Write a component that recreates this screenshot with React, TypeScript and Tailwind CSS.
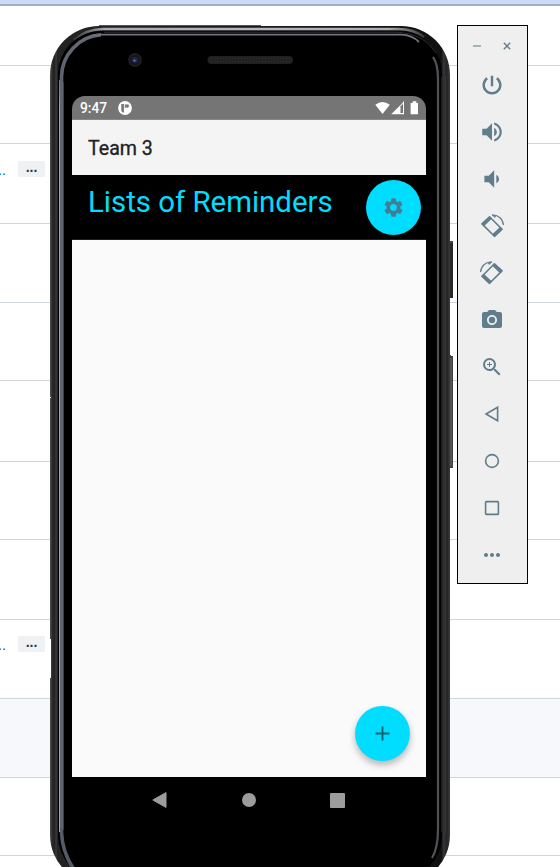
import React from "react";
import {
  MdVolumeUp,
  MdVolumeDown,
  MdPhotoCamera,
  MdZoomIn,
  MdMoreHoriz,
  MdSettings,
} from "react-icons/md";

type TableRow = { height: string; more?: boolean; shaded?: boolean };

const rows: TableRow[] = [
  { height: "h-[60px]" },
  { height: "h-[78px]" },
  { height: "h-[80px]", more: true },
  { height: "h-[79px]" },
  { height: "h-[78px]" },
  { height: "h-[81px]" },
  { height: "h-[78px]" },
  { height: "h-[80px]" },
  { height: "h-[79px]", more: true },
  { height: "h-[79px]", shaded: true },
  { height: "h-[78px]" },
];

function BackgroundTable() {
  return (
    <div className="flex h-full flex-col">
      <div className="h-[6px] shrink-0 border-b-2 border-[#a1adc9] bg-[#cadbf8]" />
      {rows.map((row, i) => (
        <div
          key={i}
          className={`flex shrink-0 items-start border-b border-[#d0d4de] ${row.height} ${row.shaded ? "bg-[#f6f8fb]" : "bg-white"}`}
        >
          {row.more && (
            <div
              className={`flex items-start font-['Liberation_Sans',sans-serif] text-[14px] ${i === 2 ? "pt-[17px]" : "pt-[16px]"}`}
            >
              <span className="w-[18px] indent-[-2px] leading-[18px] text-[#0052cc]">..</span>
              <span className="h-4 w-[27px] rounded-[1px] bg-[#eff1f3] text-center font-bold leading-[12px] text-[#253858]">
                ...
              </span>
            </div>
          )}
        </div>
      ))}
    </div>
  );
}

/* Device hardware: metal rim, bezel, camera, speaker and side buttons. */
function PhoneBody() {
  return (
    <svg className="absolute inset-0" width="404" height="862" viewBox="50 25 404 862" fill="none">
      <defs>
        <linearGradient id="rim" x1="50" x2="450" y1="0" y2="0" gradientUnits="userSpaceOnUse">
          <stop offset="0" stopColor="#505050" />
          <stop offset=".006" stopColor="#2a2a2a" />
          <stop offset=".013" stopColor="#202020" />
          <stop offset=".0145" stopColor="#444" />
          <stop offset=".018" stopColor="#232323" />
          <stop offset=".978" stopColor="#101010" />
          <stop offset=".984" stopColor="#343434" />
          <stop offset=".992" stopColor="#242424" />
          <stop offset="1" stopColor="#3a3a3a" />
        </linearGradient>
        <linearGradient id="silver" x1="70" x2="424" y1="0" y2="0" gradientUnits="userSpaceOnUse">
          <stop offset="0" stopColor="#2c2c2d" />
          <stop offset=".1" stopColor="#a6a9ae" />
          <stop offset=".5" stopColor="#b3b6bb" />
          <stop offset=".9" stopColor="#a9acb0" />
          <stop offset="1" stopColor="#3c3c3c" />
        </linearGradient>
        <linearGradient id="bevel" x1="60" x2="102" y1="0" y2="0" gradientUnits="userSpaceOnUse">
          <stop offset="0" stopColor="#5d636d" />
          <stop offset="1" stopColor="#6f6e79" />
        </linearGradient>
        <linearGradient id="bevelEdge" x1="0" x2="0" y1="70" y2="110" gradientUnits="userSpaceOnUse">
          <stop offset="0" stopColor="#5d636d" />
          <stop offset="1" stopColor="#a0a5aa" />
        </linearGradient>
      </defs>
      <path d="M449 241h4v57h-4z" fill="#292929" />
      <path d="M449 241h4v2h-4zM449 298h1v5h-1z" fill="#444" />
      <path d="M449 355h2v1h2v112h-4z" fill="#414141" />
      <path d="M451 358v108" stroke="#666" />
      <rect x="50" y="26" width="400" height="858" rx="49" fill="url(#rim)" />
      <path d="M99 25.5H261" stroke="#555" />
      <path d="M74 40Q87 29 103 29H398Q414 29 424 37" stroke="url(#silver)" strokeWidth="2.4" />
      <rect x="58" y="31" width="384" height="848" rx="43" fill="#000" />
      <path d="M104 32.2H398Q425 34 436 53" stroke="#303030" />
      <rect x="59" y="33" width="381" height="844" rx="42" fill="#000" />
      {/* left bevel: bright outer edge over a wider grey band */}
      <path d="M61.5 830V77A42.5 42.5 0 0 1 101 34.8" stroke="url(#bevel)" strokeWidth="3.6" />
      <path d="M61.5 828V832Q62 851 73 868" stroke="#555b66" strokeWidth="3.6" />
      <path d="M59 80h1V832h-1z" fill="url(#bevelEdge)" />
      <path d="M63.5 830V82" stroke="#3b404c" />
      <path d="M100 34.7H401Q412 35 419 42" stroke="#73727d" strokeWidth="1.8" />
      <path d="M433 57Q438 64 438 79V829Q438 848 432 858" stroke="#515258" strokeWidth="2.2" />
      <path d="M441.5 77V832" stroke="#202022" />
      <path d="M445.5 76V834" stroke="#363636" />
      <circle cx="135" cy="60" r="7" fill="#1c1c1d" />
      <circle cx="135" cy="60" r="4.5" fill="#121319" />
      <circle cx="135" cy="60" r="3.3" fill="#1d2549" />
      <circle cx="134.5" cy="60.5" r="1.1" fill="#7086bd" />
      <rect x="207.5" y="56" width="85.5" height="8" rx="4" fill="#202120" />
      <path d="M211 58.5H290M211 61.5H290" stroke="#303230" strokeDasharray="1 2" />
      <path d="M50 397.5h1M50.5 639v39" stroke="#fff" strokeWidth="1" />
    </svg>
  );
}

function StatusBar() {
  return (
    <div className="flex h-6 shrink-0 items-center rounded-t-[13px] border-b border-[#878787] bg-[#757575] pl-2 text-white">
      <span className="w-[38px] pt-px text-[13.8px] font-medium leading-[16px]">9:47</span>
      <svg width="14" height="14" viewBox="0 0 14 14">
        <circle cx="7" cy="7" r="6.9" fill="#fff" />
        <path d="M3.3 3h2.6v8.6H4.6Q3.3 10.5 3.3 9zM6.8 3.2h1v3.7h-1z" fill="#757575" />
        <circle cx="9.3" cy="5" r="1.7" fill="#757575" />
      </svg>
      <div className="ml-auto flex items-center pr-[5px]">
        <svg width="46" height="14" viewBox="0 0 46 14">
          <path d="M.3 3.8Q7.5-1.8 14.8 3.8L7.5 13Z" fill="#fff" />
          <path d="M29 .6V13.2H16.2Z" fill="#fff" />
          <path d="M25.5 5.2 28 2.8V12h-2.5z" fill="#757575" />
          <path d="M28.5 .6V13.2" stroke="#fff" />
          <path d="M37.7.3h3.6V2H43v11.3h-7.4V2h2.1z" fill="#fff" />
        </svg>
      </div>
    </div>
  );
}

function NavigationBar() {
  return (
    <div className="flex h-[46px] shrink-0 items-center justify-between bg-black pl-[80px] pr-[81px]">
      <svg width="15" height="16" viewBox="0 0 15 16">
        <path d="M14 .6v14.8L.8 8z" fill="#9c9c9c" stroke="#9c9c9c" strokeLinejoin="round" />
      </svg>
      <span className="h-[14px] w-[14px] rounded-full bg-[#9c9c9c]" />
      <span className="h-[15px] w-[15px] rounded-[1px] bg-[#9c9c9c]" />
    </div>
  );
}

function PhoneScreen() {
  return (
    <div className="relative ml-[22px] mt-[71px] flex h-[727px] w-[354px] flex-col font-['Roboto',sans-serif]">
      <StatusBar />
      <div className="flex h-[55px] shrink-0 items-center bg-[#f4f4f4] pl-4 pt-[3px] text-[19.6px] font-normal leading-[24px] text-[#212121] [-webkit-text-stroke:0.3px_#212121]">
        Team 3
      </div>
      <div className="flex h-[65px] shrink-0 items-start justify-between border-b border-[#202020] bg-black pl-4 pr-[5px] pt-[5px]">
        <h1 className="whitespace-nowrap pt-[5px] text-[29.4px] leading-[35px] text-[#00ddff]">Lists of Reminders</h1>
        <button className="flex h-[55px] w-[55px] items-center justify-center rounded-full bg-[#00ddff]">
          <MdSettings size={23} color="#467d96" />
        </button>
      </div>
      <div className="flex flex-1 items-end justify-end bg-[#fafafa] pb-4 pr-4">
        <button className="flex h-[55px] w-[55px] items-center justify-center rounded-full bg-[#00ddff] shadow-[0_4px_7px_rgba(0,0,0,0.28)]">
          <svg width="15" height="15" viewBox="0 0 15 15">
            <path d="M7.5.5v14M.5 7.5h14" stroke="#105e70" strokeWidth="1.8" />
          </svg>
        </button>
      </div>
      <NavigationBar />
    </div>
  );
}

function RotateIcon({ flipped = false }: { flipped?: boolean }) {
  return (
    <svg width="24" height="24" viewBox="0 0 24 24" fill="none" className={flipped ? "-scale-x-100" : ""}>
      <path d="M9.6 2.8 22 15.2 14.4 22.3 2 9.9Z" stroke="#607d8b" strokeWidth="1.6" strokeLinejoin="round" />
      <path d="M9.6 2.2 12 4.6 4 12.3 1.4 9.8ZM20.3 12.8 22.8 15.2 14.5 23.1 12 20.5Z" fill="#607d8b" />
      <path d="M12 1.2C18.5.6 23 5.2 23.4 11" stroke="#607d8b" strokeWidth="1.2" />
      <path d="m11.6.8 4.9.1-1.5 3Z" fill="#607d8b" />
    </svg>
  );
}

function EmulatorToolbar() {
  const color = "#607d8b";
  const items: React.ReactNode[] = [
    <svg width="24" height="24" viewBox="0 0 24 24" fill="none">
      <path d="M12 2.8v10.4M7.2 5.2a8.3 8.3 0 1 0 9.6 0" stroke={color} strokeWidth="2.4" />
    </svg>,
    <MdVolumeUp size={26} color={color} />,
    <MdVolumeDown size={26} color={color} />,
    <RotateIcon />,
    <RotateIcon flipped />,
    <MdPhotoCamera size={24} color={color} />,
    <MdZoomIn size={24} color={color} />,
    <svg width="16" height="16" viewBox="0 0 16 16" fill="none">
      <path d="M13.6 1.2v13.6L2 8z" stroke={color} strokeWidth="1.6" />
    </svg>,
    <svg width="16" height="16" viewBox="0 0 16 16" fill="none">
      <circle cx="8" cy="8" r="6.4" stroke={color} strokeWidth="1.6" />
    </svg>,
    <svg width="16" height="16" viewBox="0 0 16 16" fill="none">
      <rect x="1.6" y="1.6" width="12.8" height="12.8" rx=".7" stroke={color} strokeWidth="1.6" />
    </svg>,
    <MdMoreHoriz size={24} color={color} />,
  ];
  return (
    <aside className="absolute left-[457px] top-[25px] flex h-[559px] w-[71px] flex-col border border-black bg-[#efefef]">
      <div className="flex h-[35px] items-center justify-between pl-[15px] pr-[16px] pt-[5px]">
        <span className="h-[2px] w-2 bg-[#a2b3bb]" />
        <svg width="8" height="8" viewBox="0 0 8 8">
          <path d="m.8.8 6.4 6.4m0-6.4L.8 7.2" stroke={color} strokeWidth="1.3" />
        </svg>
      </div>
      {items.map((icon, i) => (
        <div key={i} className="flex h-[47px] w-[68px] items-center justify-center">{icon}</div>
      ))}
    </aside>
  );
}

export default function App() {
  return (
    <main className="relative h-[867px] w-[560px] overflow-hidden bg-white">
      <BackgroundTable />
      <div className="absolute left-[50px] top-[25px] h-[862px] w-[404px]">
        <PhoneBody />
        <PhoneScreen />
      </div>
      <EmulatorToolbar />
    </main>
  );
}
